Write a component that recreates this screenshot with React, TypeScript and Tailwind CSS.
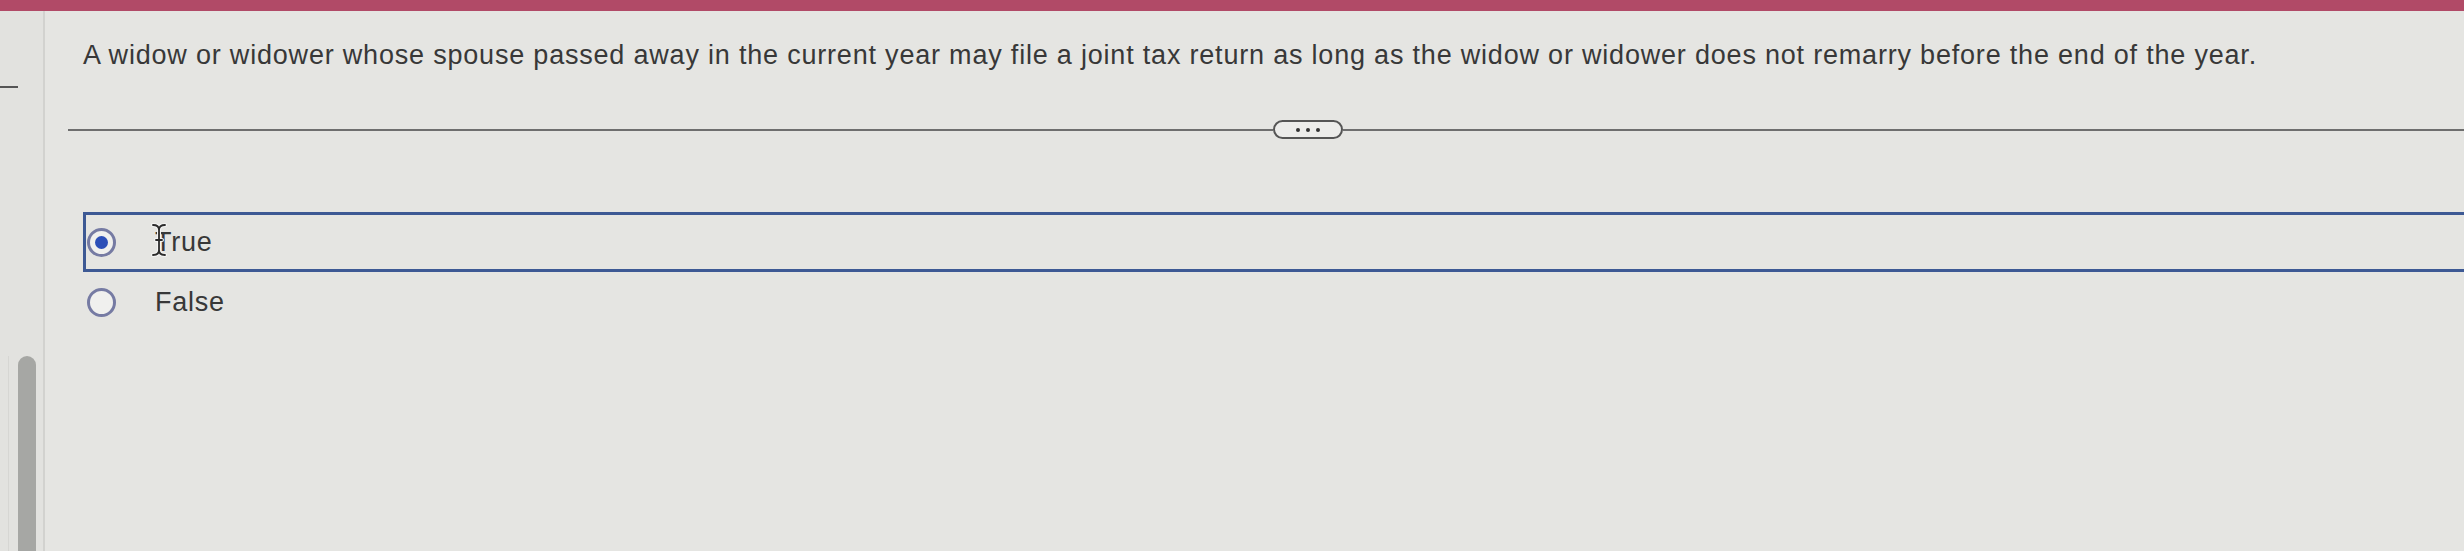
import React from "react";

function Radio({ checked }: { checked: boolean }) {
  return (
    <span className="flex h-[29px] w-[29px] shrink-0 items-center justify-center rounded-full border-[3.5px] border-[#767ba3] bg-[#f0f0ee]">
      {checked && <span className="h-[13px] w-[13px] rounded-full bg-[#2c4fb8]" />}
    </span>
  );
}

function IBeam() {
  const d = "M2 2 Q8 2 8 7 Q8 2 14 2 M8 7 V27 M2 32 Q8 32 8 27 Q8 32 14 32 M5 17 H11";
  return (
    <svg
      width="16"
      height="34"
      viewBox="0 0 16 34"
      className="pointer-events-none absolute left-[-4px] top-[-6px]"
    >
      <path d={d} fill="none" stroke="#f4f4f4" strokeWidth="4" strokeLinecap="round" />
      <path d={d} fill="none" stroke="#2a2a2a" strokeWidth="1.8" strokeLinecap="round" />
    </svg>
  );
}

export default function App() {
  return (
    <div
      className="flex h-[551px] w-full flex-col overflow-hidden bg-[#e5e5e2] text-[#383838]"
      style={{ fontFamily: '"Liberation Sans", Arial, sans-serif' }}
    >
      <div className="h-[11px] w-full shrink-0 bg-[#b14a67]" />
      <div className="flex min-h-0 flex-1">
        {/* left rail with collapse control and scrollbar */}
        <aside className="flex w-[45px] shrink-0 flex-col border-r-2 border-[#d2d2cf] bg-[#e2e2df]">
          <div className="mt-[75px] h-[2px] w-[18px] bg-[#555]" />
          <div className="ml-[8px] mt-[268px] flex min-h-0 flex-1 border-l border-[#d6d6d3] pl-[9px]">
            <div className="w-[18px] rounded-t-full bg-[#a6a7a4]" />
          </div>
        </aside>

        <main className="min-w-0 flex-1">
          <p className="pl-[38px] pt-[28px] text-[27px] leading-[32px] tracking-[0.8px] whitespace-nowrap">
            A widow or widower whose spouse passed away in the current year may file a joint tax return as long as the widow or widower does not remarry before the end of the year.
          </p>

          <div className="mt-[49px] flex items-center pl-[23px]">
            <div className="h-[2px] w-[1205px] bg-[#6e6e6e]" />
            <button className="flex h-[19px] w-[70px] shrink-0 items-center justify-center gap-[6px] rounded-full border-2 border-[#555] bg-[#ececea]">
              <span className="h-[4px] w-[4px] rounded-full bg-[#333]" />
              <span className="h-[4px] w-[4px] rounded-full bg-[#333]" />
              <span className="h-[4px] w-[4px] rounded-full bg-[#333]" />
            </button>
            <div className="h-[2px] flex-1 bg-[#6e6e6e]" />
          </div>

          <div className="mt-[73px] flex flex-col pl-[38px]">
            <label className="flex h-[60px] items-center border-y-[3px] border-l-[3px] border-[#3d5994] pl-[1px]">
              <Radio checked />
              <span className="relative ml-[39px] text-[27px] leading-none tracking-[0.75px]">
                True
                <IBeam />
              </span>
            </label>
            <label className="flex h-[60px] items-center pl-[4px]">
              <Radio checked={false} />
              <span className="ml-[39px] text-[27px] leading-none tracking-[0.75px]">False</span>
            </label>
          </div>
        </main>
      </div>
    </div>
  );
}
